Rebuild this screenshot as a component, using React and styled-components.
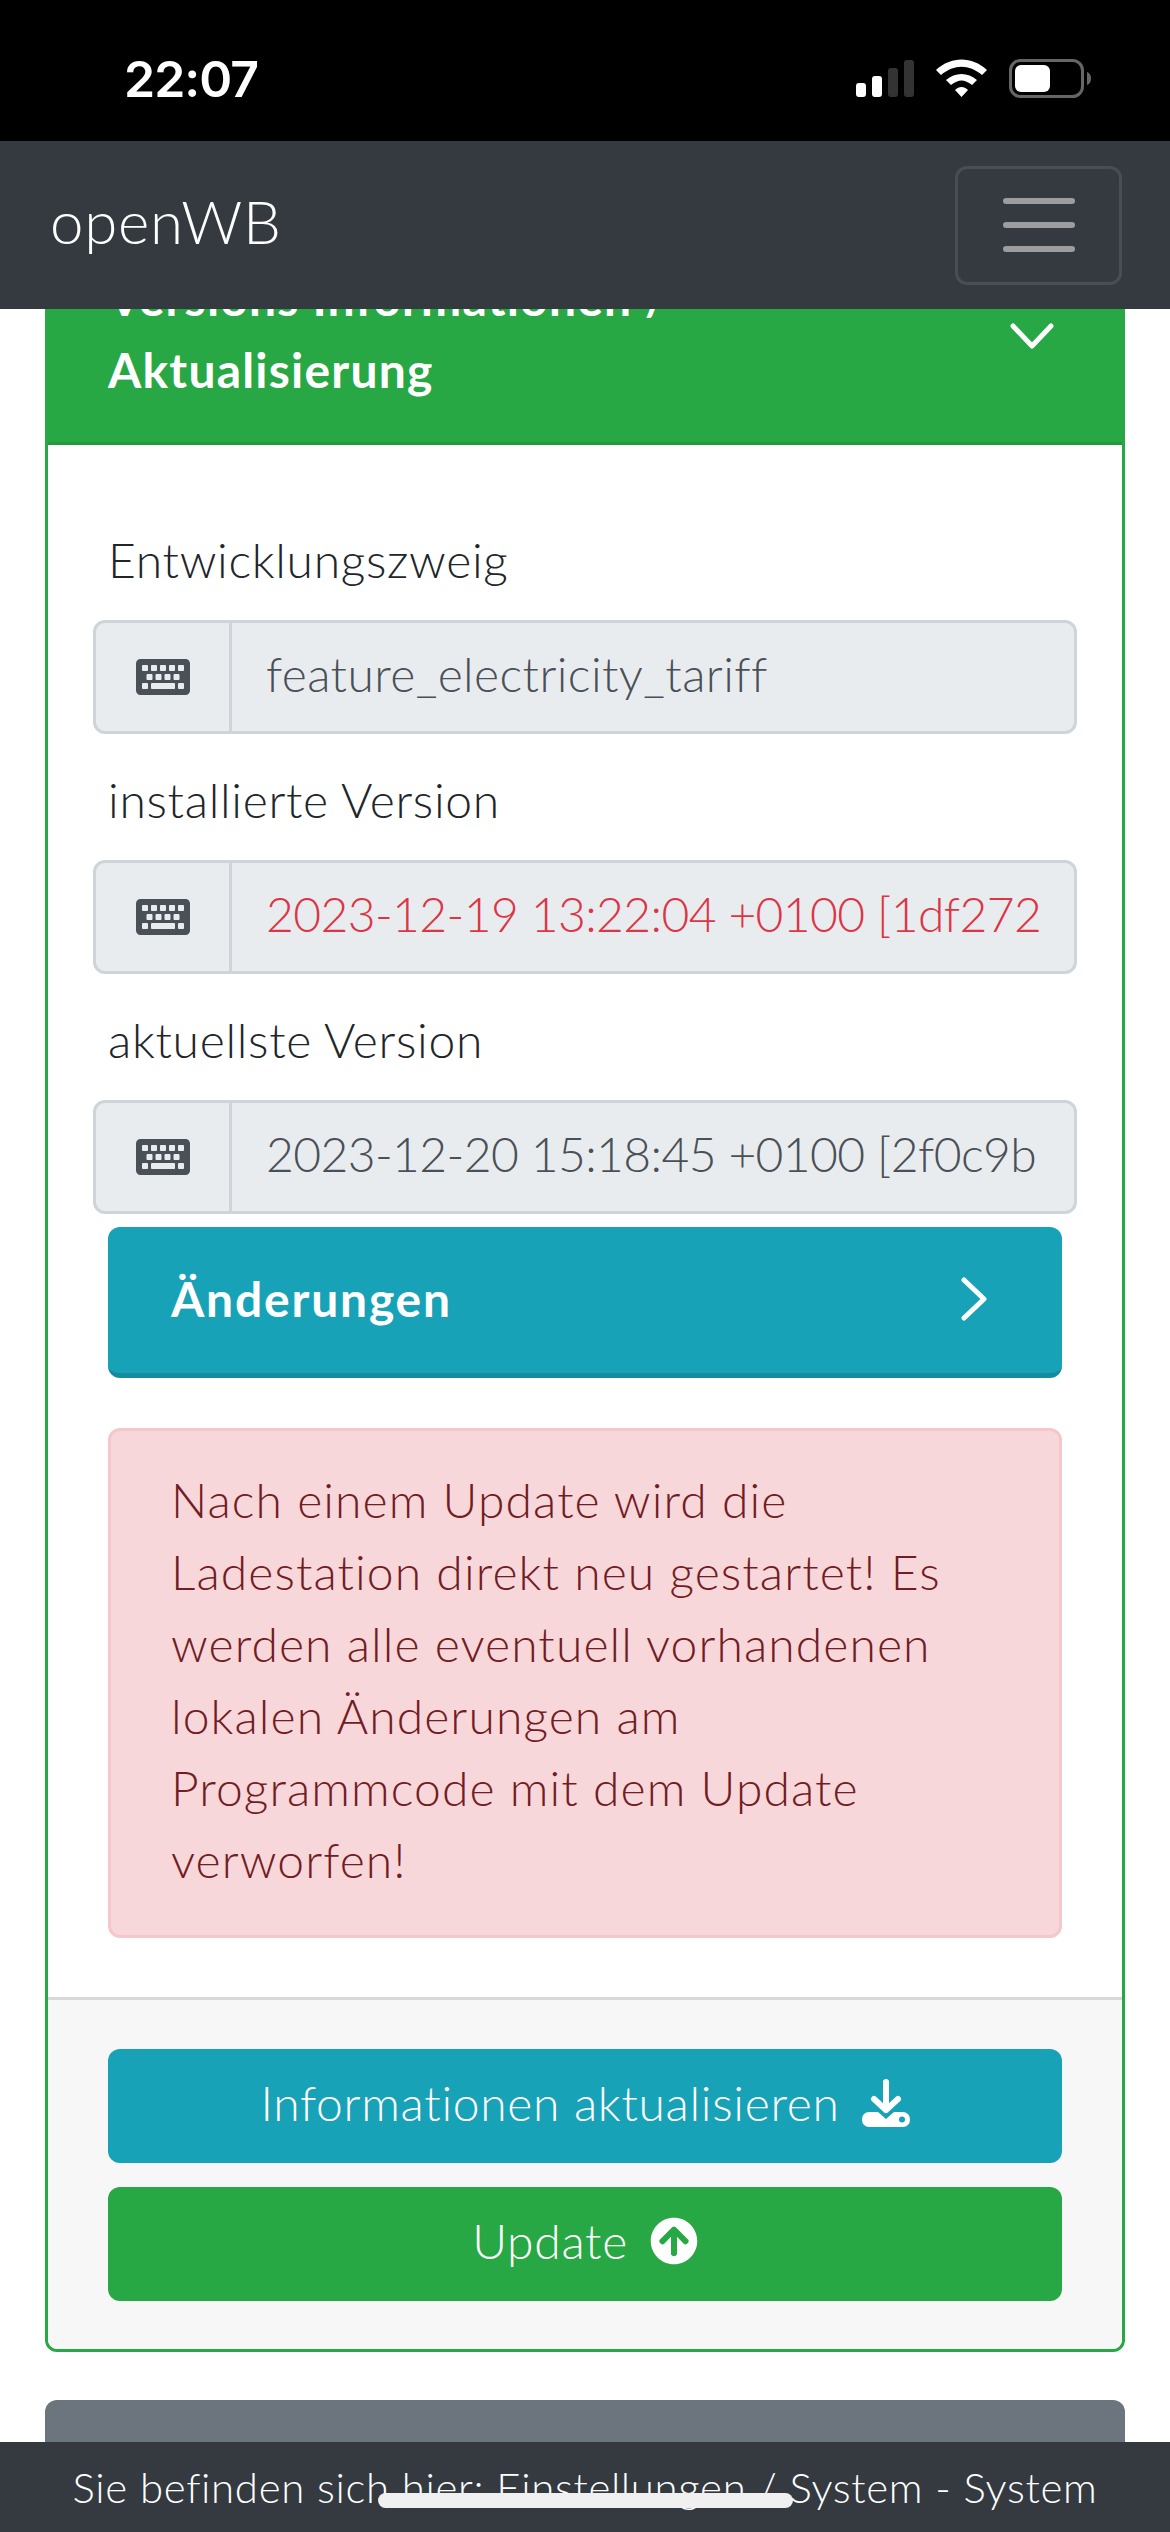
import React from "react";
import styled, { createGlobalStyle } from "styled-components";
import { FaKeyboard, FaArrowCircleUp } from "react-icons/fa";

const GlobalStyle = createGlobalStyle`
  * { box-sizing: border-box; }
  html, body { margin: 0; padding: 0; background: #fff; }
  body {
    font-family: Lato, "Noto Sans", sans-serif;
    font-weight: 300;
    font-size: 48px;
    line-height: 72px;
    letter-spacing: 0.7px;
    color: #212529;
  }
`;

const Page = styled.div`
  position: relative;
  width: 1170px;
  height: 2532px;
  display: flex;
  flex-direction: column;
  overflow: hidden;
`;

const StatusBar = styled.div`
  height: 141px;
  flex: none;
  background: #000;
  color: #fff;
  display: flex;
  align-items: center;
  justify-content: space-between;
  padding: 16px 79px 0 124px;
`;

const Clock = styled.span`
  font-family: Inter, sans-serif;
  font-weight: 600;
  font-size: 50px;
  line-height: 56px;
  letter-spacing: -1px;
`;

const StatusIcons = styled.svg`
  display: block;
  width: 235px;
  height: 39px;
`;

const Navbar = styled.nav`
  height: 168px;
  flex: none;
  background: #343a40;
  display: flex;
  align-items: center;
  justify-content: space-between;
  padding: 0 48px 0 50px;
  z-index: 2;
`;

const Brand = styled.span`
  font-size: 60px;
  padding-bottom: 8px;
  color: #fff;
`;

const Toggler = styled.button`
  width: 167px;
  height: 119px;
  padding: 0;
  display: flex;
  align-items: center;
  justify-content: center;
  background: transparent;
  border: 3px solid rgba(255, 255, 255, 0.1);
  border-radius: 12px;
`;

const Main = styled.main`
  flex: 1;
  min-height: 0;
  overflow: hidden;
  padding: 0 45px;
`;

const Card = styled.section`
  margin-top: -86px;
  border: 3px solid #28a745;
  border-radius: 12px;
  overflow: hidden;
`;

const CardHeader = styled.header`
  display: flex;
  align-items: center;
  justify-content: space-between;
  padding: 36px 68px 36px 60px;
  background: #28a745;
  color: #fff;
  font-weight: 700;
  letter-spacing: 1.2px;
  border-bottom: 3px solid #239a3e;
  svg { margin-top: 4px; }
`;

const CardTitle = styled.div`
  width: 720px;
`;

const CardBody = styled.div`
  padding: 79px 60px 59px;
`;

const FieldLabel = styled.label`
  display: block;
  margin-bottom: 24px;
`;

const InputGroup = styled.div`
  display: flex;
  height: 114px;
  margin: 0 -15px 30px;
  background: #e9ecef;
  border: 3px solid #ced4da;
  border-radius: 12px;
  color: #495057;
`;

const InputAddon = styled.div`
  flex: none;
  width: 136px;
  display: flex;
  align-items: center;
  justify-content: center;
  border-right: 3px solid #ced4da;
  font-size: 54px;
  svg { display: block; }
`;

const InputValue = styled.div`
  flex: 1;
  min-width: 0;
  padding: 0 24px 6px 34px;
  line-height: 102px;
  white-space: nowrap;
  overflow: hidden;
  letter-spacing: ${(p) => (p.$numeric ? "-0.6px" : "0.4px")};
  color: ${(p) => (p.$outdated ? "#dc3545" : "#495057")};
`;

const CollapseButton = styled.div`
  display: flex;
  align-items: center;
  justify-content: space-between;
  height: 151px;
  margin-top: -17px;
  padding: 0 75px 3px 63px;
  background: #17a2b8;
  border-bottom: 5px solid #138c9f;
  border-radius: 12px;
  color: #fff;
  font-weight: 700;
  letter-spacing: 1.8px;
`;

const Alert = styled.div`
  margin-top: 50px;
  padding: 33px 70px 39px 60px;
  background: #f8d7da;
  border: 3px solid #f5c6cb;
  border-radius: 12px;
  color: #721c24;
  letter-spacing: 1.1px;
`;

const CardFooter = styled.footer`
  display: flex;
  flex-direction: column;
  gap: 24px;
  padding: 49px 60px 48px;
  background: #f7f7f7;
  border-top: 3px solid #d8d8d8;
`;

const ActionButton = styled.div`
  height: 114px;
  padding-bottom: 6px;
  display: flex;
  align-items: center;
  justify-content: center;
  gap: 22px;
  border-radius: 12px;
  color: #fff;
  background: ${(p) => (p.$tone === "info" ? "#17a2b8" : "#28a745")};
  svg { display: block; flex: none; }
`;

const NextCard = styled.div`
  height: 200px;
  margin-top: 48px;
  background: #6c757d;
  border-radius: 12px 12px 0 0;
`;

const Breadcrumb = styled.footer`
  height: 90px;
  flex: none;
  display: flex;
  align-items: center;
  justify-content: center;
  background: #343a40;
  color: #fff;
  font-size: 42px;
  letter-spacing: 0.65px;
  white-space: nowrap;
  z-index: 2;
`;

const HomeIndicator = styled.div`
  position: absolute;
  left: 378px;
  bottom: 24px;
  width: 415px;
  height: 15px;
  border-radius: 8px;
  background: #f0f0f0;
  z-index: 3;
`;

const Field = ({ label, value, numeric, outdated }) => (
  <>
    <FieldLabel>{label}</FieldLabel>
    <InputGroup>
      <InputAddon>
        <FaKeyboard />
      </InputAddon>
      <InputValue $numeric={numeric} $outdated={outdated}>
        {value}
      </InputValue>
    </InputGroup>
  </>
);

function SignalWifiBattery() {
  return (
    <StatusIcons viewBox="0 0 235 39">
      <rect x="0" y="24" width="10" height="14" rx="3" fill="#fff" />
      <rect x="16" y="17" width="10" height="21" rx="3" fill="#fff" />
      <rect x="32" y="9" width="10" height="29" rx="3" fill="#333" />
      <rect x="48" y="1" width="10" height="37" rx="3" fill="#333" />
      <path
        d="M80 11 C95 -3 116 -3 131 11 L126 16 C113 5 98 5 85 16 Z M90 21 C99 13 112 13 121 21 L116 26 C108 20 103 20 95 26 Z M99 31 C103 27 108 27 112 31 L105.500 38 Z"
        fill="#fff"
      />
      <rect x="154.500" y="1.500" width="72" height="36" rx="10" fill="none" stroke="#666" strokeWidth="3" />
      <rect x="159" y="6" width="35" height="27" rx="6" fill="#fff" />
      <path d="M231 13 C234 14 235 17 235 19.500 C235 22 234 25 231 26 Z" fill="#666" />
    </StatusIcons>
  );
}

const Chevron = ({ points, width, height }) => (
  <svg width={width} height={height} viewBox={`0 0 ${width} ${height}`} fill="none" stroke="#fff" strokeWidth="5" strokeLinecap="round" strokeLinejoin="round">
    <polyline points={points} />
  </svg>
);

function DriveDownload() {
  return (
    <svg width="48" height="48" viewBox="0 0 48 48" fill="#fff">
      <path d="M24 3 V31 M12 20 L24 31 L36 20" fill="none" stroke="#fff" strokeWidth="6" strokeLinecap="round" strokeLinejoin="round" />
      <path d="M7 33 H16 L24 40 L32 33 H41 A7 7 0 0 1 48 40 V41 A7 7 0 0 1 41 48 H7 A7 7 0 0 1 0 41 V40 A7 7 0 0 1 7 33 Z M40 37.500 A3 3 0 1 0 40 43.500 A3 3 0 1 0 40 37.500 Z" fillRule="evenodd" />
    </svg>
  );
}

export default function App() {
  return (
    <Page>
      <GlobalStyle />
      <StatusBar>
        <Clock>22:07</Clock>
        <SignalWifiBattery />
      </StatusBar>
      <Navbar>
        <Brand>openWB</Brand>
        <Toggler aria-label="Menü">
          <svg width="72" height="54" viewBox="0 0 72 54" fill="#9b9d9f">
            <rect x="0" y="0" width="72" height="6" rx="3" />
            <rect x="0" y="24" width="72" height="6" rx="3" />
            <rect x="0" y="48" width="72" height="6" rx="3" />
          </svg>
        </Toggler>
      </Navbar>
      <Main>
        <Card>
          <CardHeader>
            <CardTitle>Versions Informationen / Aktualisierung</CardTitle>
            <Chevron width={44} height={26} points="3,3 22,23 41,3" />
          </CardHeader>
          <CardBody>
            <Field label="Entwicklungszweig" value="feature_electricity_tariff" />
            <Field label="installierte Version" value="2023-12-19 13:22:04 +0100 [1df272" numeric outdated />
            <Field label="aktuellste Version" value="2023-12-20 15:18:45 +0100 [2f0c9b" numeric />
            <CollapseButton>
              <span>Änderungen</span>
              <Chevron width={26} height={44} points="3,3 23,22 3,41" />
            </CollapseButton>
            <Alert>
              Nach einem Update wird die Ladestation direkt neu gestartet! Es werden alle eventuell
              vorhandenen lokalen Änderungen am Programmcode mit dem Update verworfen!
            </Alert>
          </CardBody>
          <CardFooter>
            <ActionButton $tone="info">
              Informationen aktualisieren
              <DriveDownload />
            </ActionButton>
            <ActionButton>
              Update
              <FaArrowCircleUp size={48} />
            </ActionButton>
          </CardFooter>
        </Card>
        <NextCard />
      </Main>
      <Breadcrumb>Sie befinden sich hier: Einstellungen / System - System</Breadcrumb>
      <HomeIndicator />
    </Page>
  );
}
